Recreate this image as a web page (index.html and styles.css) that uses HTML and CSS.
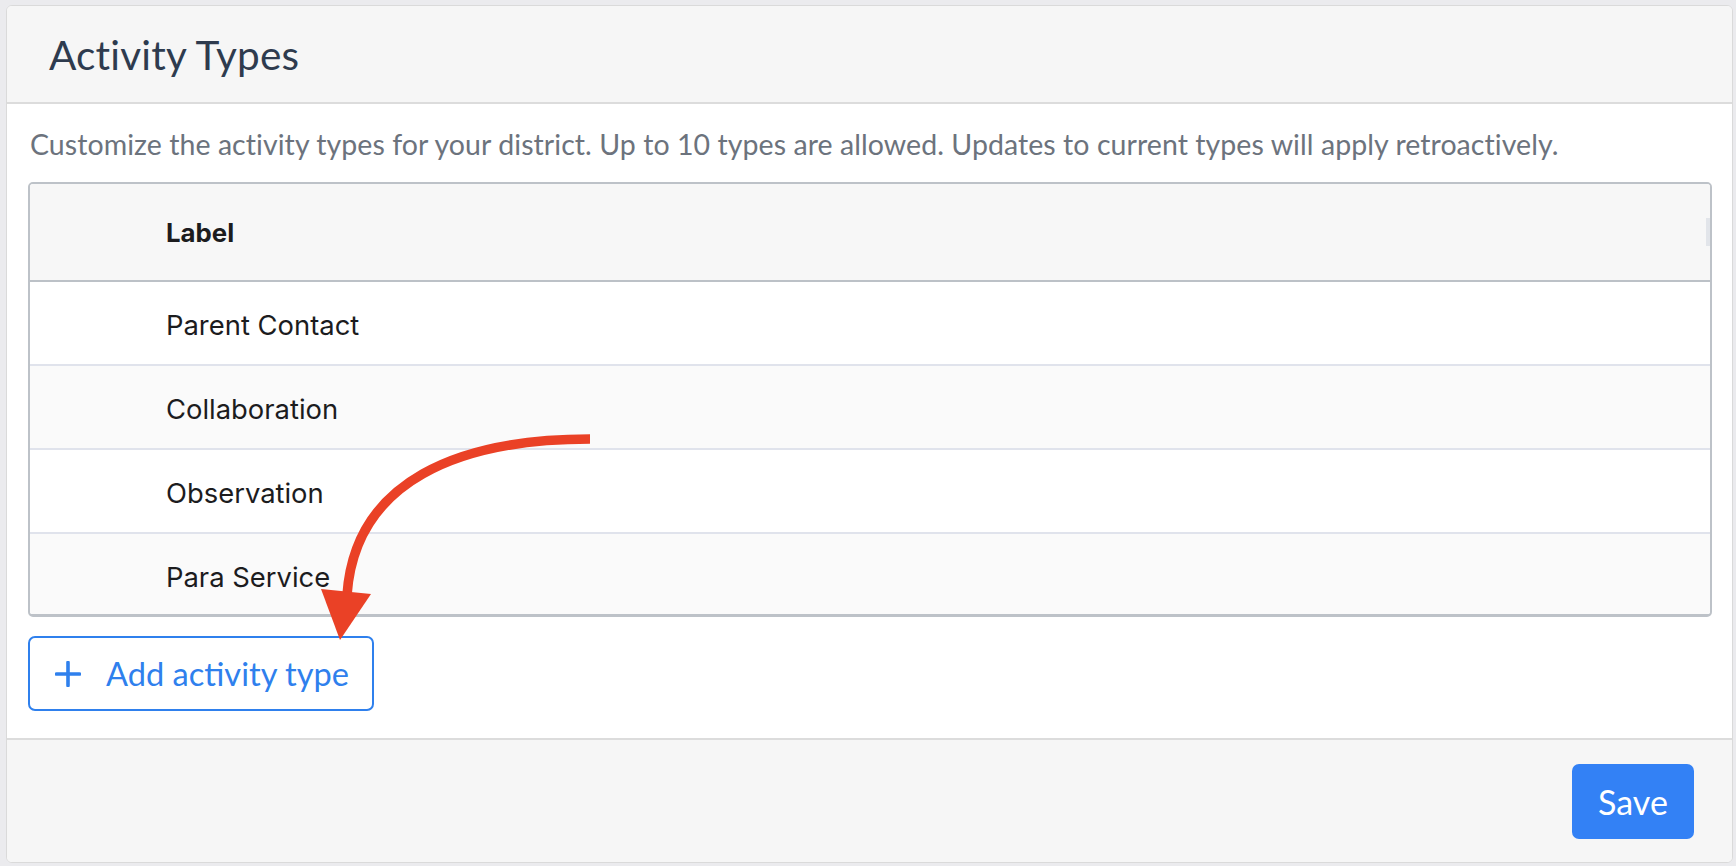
FILE: index.html
```html
<!DOCTYPE html>
<html lang="en">
<head>
<meta charset="utf-8">
<title>Activity Types</title>
<link rel="stylesheet" href="styles.css">
</head>
<body>
<div class="card">
  <div class="card-header">
    <h1 class="title">Activity Types</h1>
  </div>
  <div class="card-body">
    <p class="desc">Customize the activity types for your district. Up to 10 types are allowed. Updates to current types will apply retroactively.</p>
    <div class="table">
      <div class="thead">
        <div class="th">Label</div>
        <div class="handle"></div>
      </div>
      <div class="tbody">
        <div class="tr"><div class="td">Parent Contact</div></div>
        <div class="tr alt"><div class="td">Collaboration</div></div>
        <div class="tr"><div class="td">Observation</div></div>
        <div class="tr alt"><div class="td">Para Service</div></div>
      </div>
    </div>
    <button class="btn-add" type="button">
      <svg class="plus" width="26" height="26" viewBox="0 0 26 26"><path d="M13 1.5v23M1.5 13h23" stroke="#2f80ed" stroke-width="3.6" stroke-linecap="round"/></svg>
      <span>Add activity type</span>
    </button>
  </div>
  <div class="card-footer">
    <button class="btn-save" type="button">Save</button>
  </div>
</div>
<svg class="annot" width="1736" height="866" viewBox="0 0 1736 866">
  <path d="M590 439 C460 439 355 480 347 595" fill="none" stroke="#ea4126" stroke-width="9.5"/>
  <polygon points="321,589 371,594 340,640" fill="#ea4126"/>
</svg>
</body>
</html>
```
FILE: styles.css
```css
* { box-sizing: border-box; }
html, body { margin: 0; padding: 0; }
body {
  background: #ebebee;
  width: 1736px;
  height: 866px;
  overflow: hidden;
  position: relative;
  font-family: Lato, "Open Sans", sans-serif;
  padding: 5px 3px 0 6px;
}
.card {
  background: #fff;
  border: 1px solid #dadada;
  border-radius: 6px;
  height: 858px;
  display: flex;
  flex-direction: column;
  overflow: hidden;
}
.card-header {
  background: #f6f6f6;
  border-bottom: 2px solid #dcdcdc;
  height: 98px;
  display: flex;
  align-items: center;
  padding-left: 42px;
}
.title {
  margin: 0;
  font-weight: 400;
  font-size: 40.5px;
  color: #2e3b4e;
  letter-spacing: 0.2px;
}
.card-body {
  padding: 0 20px 27px 21px;
}
.desc {
  margin: 0;
  height: 78px;
  display: flex;
  align-items: center;
  padding-top: 2px;
  font-size: 28.5px;
  color: #6c737d;
  letter-spacing: 0.06px;
  padding-left: 2px;
}
.table {
  border: 2px solid #bdc2c8;
  border-bottom-width: 3px;
  border-radius: 5px;
  height: 435px;
  overflow: hidden;
  font-family: Inter, "Noto Sans", sans-serif;
  color: #1c1c1e;
}
.thead {
  background: #f7f7f7;
  height: 98px;
  border-bottom: 2px solid #bcc1c7;
  display: flex;
  align-items: center;
  padding-left: 136px;
}
.th {
  flex: 1;
  font-weight: 700;
  font-size: 25.8px;
}
.handle {
  width: 4px;
  height: 28px;
  background: #e2e5ea;
  margin-right: 0;
}
.tr {
  height: 84px;
  border-bottom: 2px solid #e0e3ec;
  display: flex;
  align-items: center;
  padding-left: 136px;
  background: #fff;
}
.tr.alt { background: #fafafa; }
.td {
  font-size: 27.4px;
  padding-top: 4px;
}
.btn-add {
  margin-top: 19px;
  width: 346px;
  height: 75px;
  border: 2px solid #2f80ed;
  border-radius: 7px;
  background: #fff;
  display: flex;
  align-items: center;
  padding: 0 0 0 25px;
  gap: 25px;
  font-family: Lato, "Open Sans", sans-serif;
  font-size: 32.6px;
  color: #2f80ed;
  cursor: pointer;
}
.plus { flex: none; }
.card-footer {
  flex: 1;
  background: #f6f6f6;
  border-top: 2px solid #dcdcdc;
  display: flex;
  align-items: center;
  justify-content: flex-end;
  padding-right: 38px;
}
.btn-save {
  width: 122px;
  height: 75px;
  border: none;
  border-radius: 7px;
  background: #3381f5;
  color: #fff;
  font-family: Lato, "Open Sans", sans-serif;
  font-size: 34px;
  cursor: pointer;
}
.annot {
  position: absolute;
  left: 0;
  top: 0;
  pointer-events: none;
}
```
